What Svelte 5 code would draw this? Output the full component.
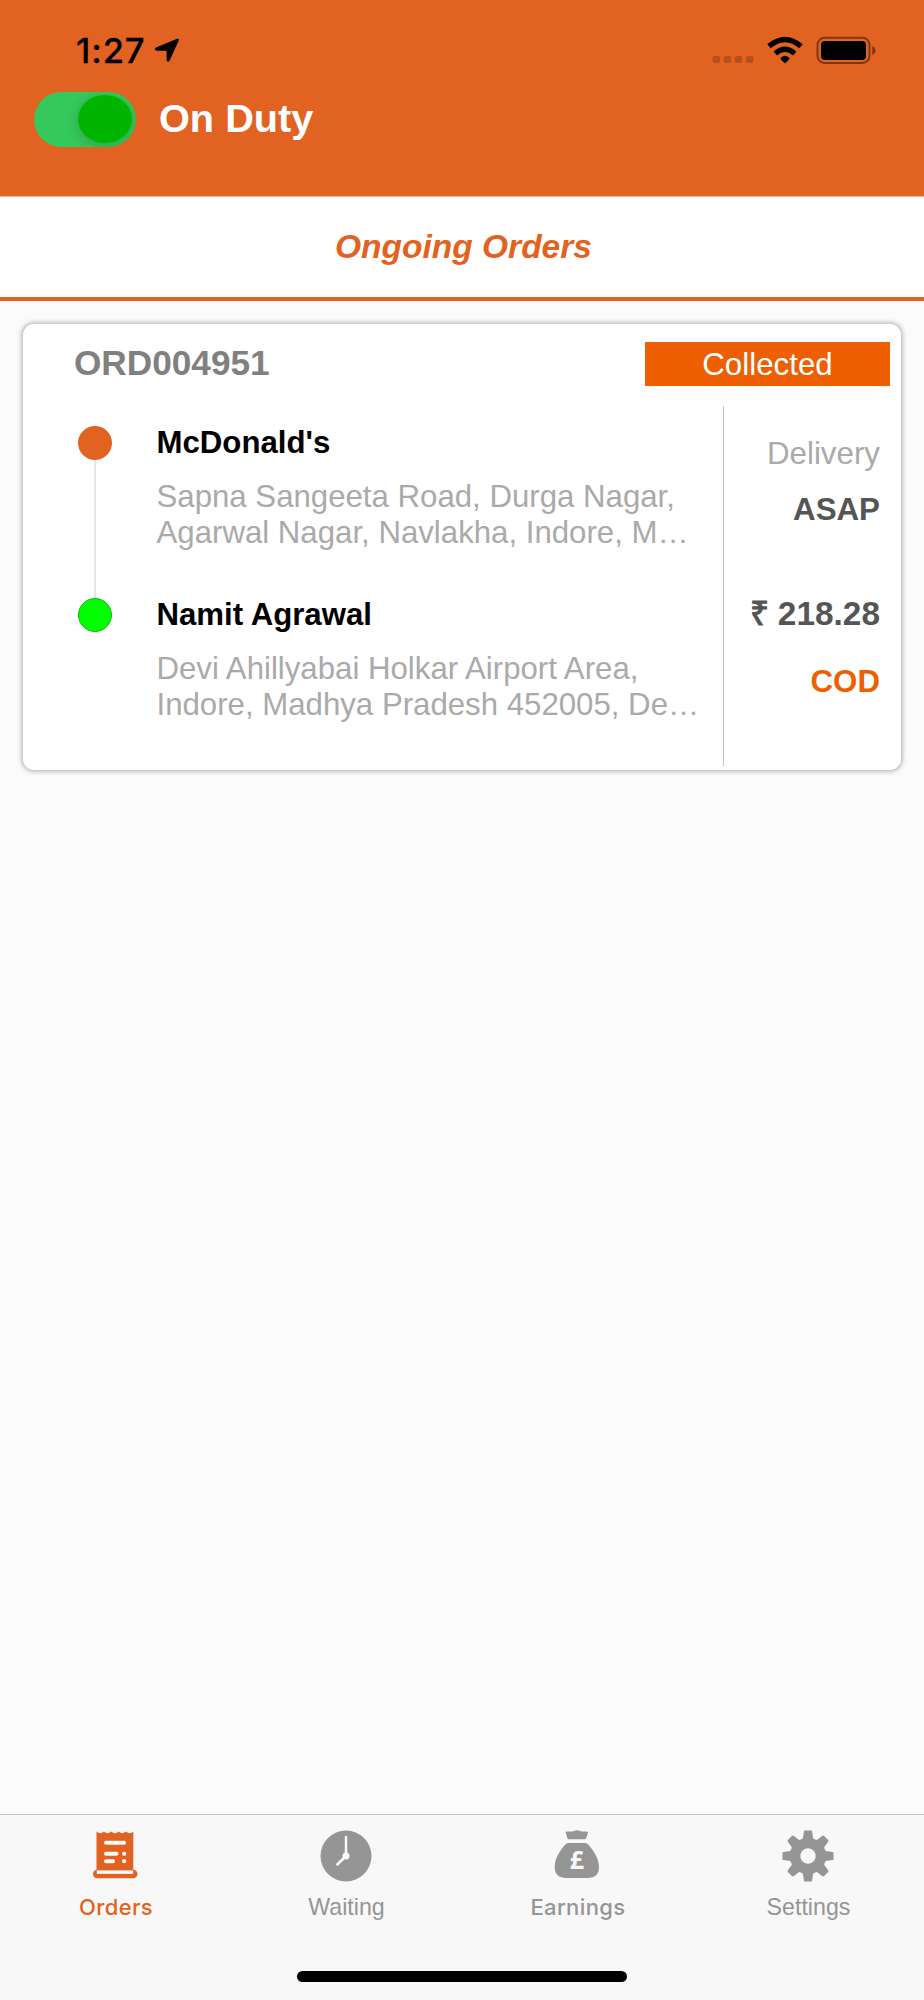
<script>
  const stops = [
    {
      name: "McDonald's",
      lines: ['Sapna Sangeeta Road, Durga Nagar,', 'Agarwal Nagar, Navlakha, Indore, M…'],
    },
    {
      name: 'Namit Agrawal',
      lines: ['Devi Ahillyabai Holkar Airport Area,', 'Indore, Madhya Pradesh 452005, De…'],
    },
  ];
  const teeth = [0, 45, 90, 135, 180, 225, 270, 315];
</script>

<div class="screen">
  <header>
    <div class="status">
      <span class="time">1:27</span>
      <svg class="locate" width="26" height="26" viewBox="0 0 26 26">
        <path d="M2 10.500 22.500 2Q25.600 1 24.600 4L15.600 23.600Q14.200 26 12.600 23.200V15Q12.600 13.800 11.500 13.800H2.500Q-.4 12.300 2 10.500Z" />
      </svg>
      <div class="signals">
        <svg width="165" height="30" viewBox="0 0 165 30">
          <g fill="#b6501c">
            <rect x="0.500" y="21" width="7.500" height="7" rx="2" />
            <rect x="11.700" y="21" width="7.500" height="7" rx="2" />
            <rect x="22.800" y="21" width="7.500" height="7" rx="2" />
            <rect x="34" y="21" width="7.500" height="7" rx="2" />
          </g>
          <path d="M73 28.400 68.800 24.200Q68 23.300 69 22.400Q73 19.300 77 22.400Q78 23.300 77.200 24.200Z" />
          <g fill="none" stroke="#000" stroke-width="5.300">
            <path d="M63.300 18.400Q73 10.200 82.700 18.400" />
            <path d="M57 11.300Q73-2.300 89 11.300" />
          </g>
          <rect x="105.500" y="2.800" width="52" height="25.200" rx="7" fill="none" stroke="#7c3712" stroke-width="1.900" />
          <rect x="109" y="6" width="45" height="19" rx="4" />
          <path d="M160.300 11Q163.500 12.500 163.500 15.400T160.300 20Z" fill="#7c3712" />
        </svg>
      </div>
    </div>
    <div class="duty">
      <div class="toggle"><div class="knob"></div></div>
      <span>On Duty</span>
    </div>
  </header>

  <div class="heading">Ongoing Orders</div>

  <main>
    <article>
      <div class="top">
        <span class="order">ORD004951</span>
        <span class="badge">Collected</span>
      </div>
      <div class="body">
        <div class="track">
          <i class="dot pickup"></i>
          <i class="line"></i>
          <i class="dot dropoff"></i>
        </div>
        <div class="stops">
          {#each stops as stop}
            <section>
              <div class="name">{stop.name}</div>
              {#each stop.lines as line}
                <div class="addr">{line}</div>
              {/each}
            </section>
          {/each}
        </div>
        <div class="info">
          <span class="delivery">Delivery</span>
          <span class="asap">ASAP</span>
          <span class="price">₹ 218.28</span>
          <span class="cod">COD</span>
        </div>
      </div>
    </article>
  </main>

  <nav>
    <div class="tab active">
      <svg width="52" height="52" viewBox="0 0 52 52">
        <path d="M7.500 1.500q3.680 3.500 7.360 0q3.680 3.500 7.360 0q3.680 3.500 7.360 0q3.680 3.500 7.360 0q3.680 3.500 7.360 0V41H7.500Z" />
        <rect x="4" y="39.800" width="44.500" height="8.400" rx="4.200" />
        <g class="cut">
          <rect x="7.800" y="40.400" width="36.300" height="3.500" />
          <rect x="15" y="10.700" width="22" height="4" rx="2" />
          <rect x="15" y="21.800" width="14.500" height="4" rx="2" />
          <rect x="15" y="29.200" width="11" height="4" rx="2" />
          <circle cx="35.200" cy="23.800" r="2.100" />
          <circle cx="35.200" cy="31.200" r="2.100" />
        </g>
      </svg>
      <span class="orders">Orders</span>
    </div>
    <div class="tab">
      <svg width="52" height="52" viewBox="0 0 52 52">
        <circle cx="26" cy="26" r="25.500" />
        <circle class="cut" cx="26" cy="26" r="3.500" />
        <path class="hand" d="M26 26V7M26 26 17.300 34.500" />
      </svg>
      <span class="waiting">Waiting</span>
    </div>
    <div class="tab">
      <svg width="52" height="52" viewBox="0 0 52 52">
        <path d="M15.500 1.500H21Q22.500 1.500 23.500.800 26-.400 28.500.800 29.500 1.500 31 1.500H35.500Q37.300 1.500 36.900 3L35 8.200Q34.700 9.300 33.500 9.300H18Q16.800 9.300 16.500 8.200L14.800 3Q14.400 1.500 15.500 1.500Z" />
        <path d="M17.500 13H34Q36 13 37.500 14.800C43 21 48 29 48 37Q48 48 36.500 48H15.500Q3.700 48 3.700 37C3.700 29 8.500 21 14 14.800Q15.500 13 17.500 13Z" />
        <text x="25.800" y="38.800" text-anchor="middle">£</text>
      </svg>
      <span class="earnings">Earnings</span>
    </div>
    <div class="tab">
      <svg width="52" height="52" viewBox="0 0 52 52">
        <circle cx="26" cy="26" r="12.900" fill="none" stroke="#959595" stroke-width="10.400" />
        {#each teeth as angle}
          <path d="M18.600 10.600Q20.600 9.600 20.900 8L21.900 1.400Q22.100.500 23 .500H29Q29.900.500 30.100 1.400L31.100 8Q31.400 9.600 33.400 10.600L30 15H22Z" transform="rotate({angle} 26 26)" />
        {/each}
      </svg>
      <span class="settings">Settings</span>
    </div>
    <div class="home"></div>
  </nav>
</div>

<style>
  :global(body) { margin: 0; }
  .screen {
    width: 924px;
    height: 2000px;
    display: flex;
    flex-direction: column;
    background: #fbfbfb;
    font-family: 'Liberation Sans', Arial, sans-serif;
    white-space: nowrap;
    overflow: hidden;
  }
  header { height: 196px; background: #e26321; border-bottom: 1px solid #f3b698; }
  .status { display: flex; align-items: flex-start; height: 91px; padding: 35px 47px 0 76px; box-sizing: border-box; }
  .time { font: 500 34.600px/30px Inter, sans-serif; width: 78px; letter-spacing: 0.900px; -webkit-text-stroke: 0.300px #000; }
  .locate { margin-top: 2px; }
  .signals { margin-left: auto; height: 30px; }
  .duty { display: flex; align-items: center; padding-left: 34px; height: 56px; }
  .duty span { font-weight: 700; font-size: 39.700px; line-height: 54px; height: 56px; color: #fff; margin-left: 23px; }
  .toggle {
    width: 102px;
    height: 55px;
    border-radius: 28px;
    background: #35c95b;
    display: flex;
    align-items: center;
    justify-content: flex-end;
    padding-right: 4px;
    box-sizing: border-box;
    overflow: hidden;
  }
  .knob { width: 54px; height: 48px; border-radius: 50%; background: #00b500; box-shadow: 0 3px 14px rgba(0, 0, 0, 0.200); }
  .heading {
    height: 96px;
    padding: 1px 0 3px 3px;
    border-bottom: 4px solid #e26321;
    background: #fff;
    color: #e26321;
    text-align: center;
    font: italic 700 33.500px/98px 'Liberation Sans', Arial, sans-serif;
  }
  main { flex: 1; padding: 22px 22px 0; }
  article {
    height: 448px;
    box-sizing: border-box;
    background: #fff;
    border: 1px solid #c7cdcc;
    border-top-color: #cbd1cf;
    border-radius: 12px;
    box-shadow: 0 0 5px rgba(70, 95, 90, 0.500);
  }
  .top { display: flex; justify-content: space-between; height: 82px; padding: 18px 11px 0 51px; box-sizing: border-box; }
  .order { font-weight: 700; font-size: 35.200px; line-height: 42px; color: #808080; }
  .badge { width: 245px; height: 44px; background: #ed5f00; color: #fff; font-size: 31.300px; line-height: 46px; text-align: center; }
  .body { display: flex; height: 360px; }
  .track { width: 34px; margin-left: 55px; padding-top: 20px; display: flex; flex-direction: column; align-items: center; }
  .dot { width: 34px; height: 34px; border-radius: 50%; box-sizing: border-box; }
  .dot.pickup { background: #e26321; }
  .dot.dropoff { background: #0f0; border: 1px solid #14b814; }
  .line { width: 2px; height: 138px; background: #e5e5e5; }
  .stops { width: 566.500px; margin-left: 44.500px; padding-top: 19px; box-sizing: border-box; }
  section { height: 172px; }
  .name { font-weight: 700; font-size: 31.200px; line-height: 36px; margin-bottom: 18px; color: #000; }
  .addr { font-size: 31.200px; line-height: 36px; color: #aaa; }
  .info {
    flex: 1;
    border-left: 1px solid #c2c2c2;
    padding: 30px 21px 0 0;
    box-sizing: border-box;
    display: flex;
    flex-direction: column;
    align-items: flex-end;
    font-size: 31.300px;
    line-height: 36px;
    font-weight: 700;
    color: #555;
  }
  .delivery { font-weight: 400; color: #aaa; }
  .asap { margin-top: 20px; }
  .price { margin-top: 68px; font-size: 33.400px; }
  .cod { margin-top: 32px; color: #ed5f00; }
  nav {
    height: 186px;
    box-sizing: border-box;
    border-top: 1px solid #c5c5c5;
    background: #f8f8f8;
    display: grid;
    grid-template-columns: repeat(4, 231px);
    grid-template-rows: 156px 11px;
  }
  .tab { display: flex; flex-direction: column; align-items: center; padding-top: 15px; color: #959595; fill: #959595; }
  .tab.active { color: #e26321; fill: #e26321; }
  .tab svg { display: block; margin-right: 1px; }
  .tab span { font-size: 23.200px; line-height: 28px; margin-top: 11px; }
  .tab .orders, .tab .earnings { font-family: Inter, sans-serif; font-size: 22px; font-weight: 500; letter-spacing: 0.400px; padding-left: 1px; }
  .cut { fill: #f8f8f8; }
  .hand { stroke: #f8f8f8; stroke-width: 2.500; stroke-linecap: round; fill: none; }
  text { font: 700 25px 'Open Sans', sans-serif; fill: #f8f8f8; }
  .home { grid-column: 1 / -1; justify-self: center; width: 330px; height: 11px; border-radius: 6px; background: #000; }
</style>
